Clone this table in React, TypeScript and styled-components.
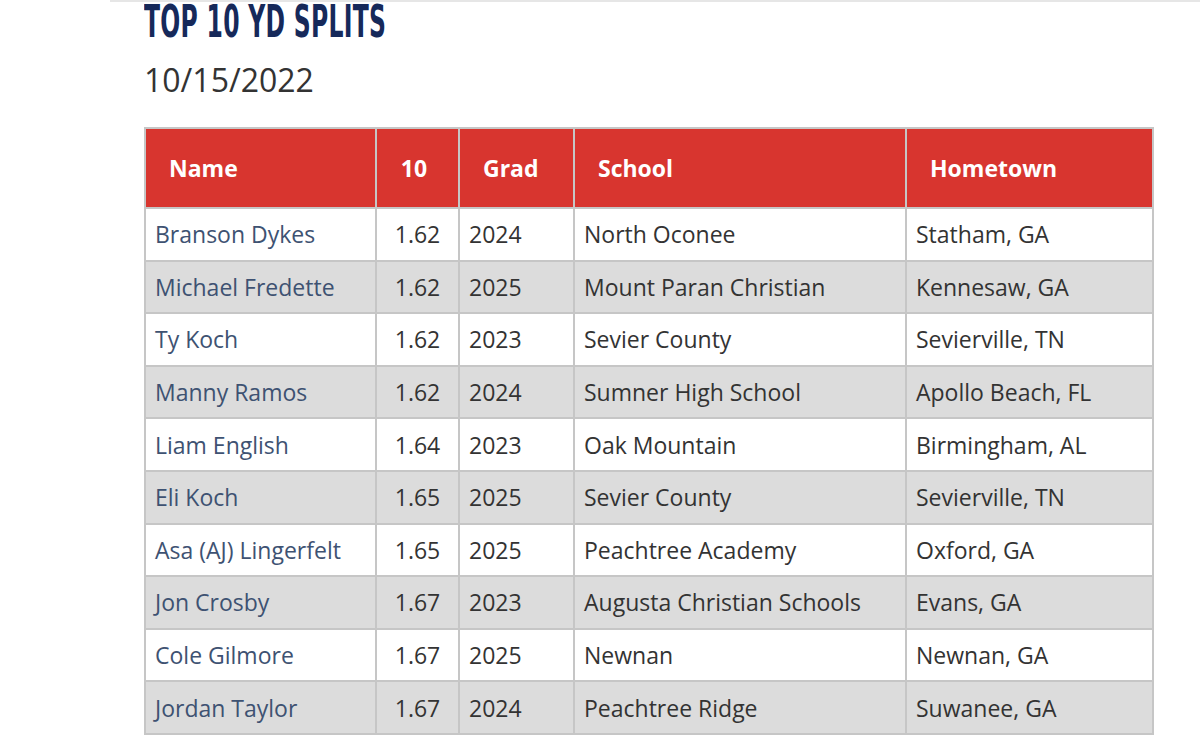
import styled, { createGlobalStyle } from "styled-components";

const GlobalStyle = createGlobalStyle`
  * { box-sizing: border-box; }
  body {
    margin: 0;
    background: #ffffff;
    font-family: "Open Sans", "Noto Sans", sans-serif;
    color: #333333;
    overflow: hidden;
  }
`;

const ROWS = [
  ["Branson Dykes", "1.62", "2024", "North Oconee", "Statham, GA"],
  ["Michael Fredette", "1.62", "2025", "Mount Paran Christian", "Kennesaw, GA"],
  ["Ty Koch", "1.62", "2023", "Sevier County", "Sevierville, TN"],
  ["Manny Ramos", "1.62", "2024", "Sumner High School", "Apollo Beach, FL"],
  ["Liam English", "1.64", "2023", "Oak Mountain", "Birmingham, AL"],
  ["Eli Koch", "1.65", "2025", "Sevier County", "Sevierville, TN"],
  ["Asa (AJ) Lingerfelt", "1.65", "2025", "Peachtree Academy", "Oxford, GA"],
  ["Jon Crosby", "1.67", "2023", "Augusta Christian Schools", "Evans, GA"],
  ["Cole Gilmore", "1.67", "2025", "Newnan", "Newnan, GA"],
  ["Jordan Taylor", "1.67", "2024", "Peachtree Ridge", "Suwanee, GA"],
];

const COLS = [231, 83, 115, 332, 247];

const Frame = styled.div`
  margin-left: 110px;
  border-top: 2px solid #e6e6e6;
  padding: 0 0 0 34px;
`;

const Title = styled.h1`
  margin: 0;
  height: 40px;
  font-family: "DejaVu Sans Condensed", "DejaVu Sans", sans-serif;
  font-weight: 700;
  font-size: 45px;
  line-height: 40px;
  color: #16295a;
  white-space: nowrap;
  display: block;
  transform: scaleX(0.58);
  transform-origin: left center;
  letter-spacing: 0.5px;
`;

const DateLine = styled.div`
  font-size: 32px;
  line-height: 44px;
  margin-top: 16px;
  color: #333333;
`;

const Table = styled.table`
  margin-top: 25px;
  border-collapse: collapse;
  table-layout: fixed;
  width: 1008px;
  border: 2px solid #c6c6c6;
`;

const HeadCell = styled.th<{ $center?: boolean }>`
  height: 80px;
  background: #d8352f;
  color: #ffffff;
  font-weight: 700;
  font-size: 23px;
  text-align: ${(p) => (p.$center ? "center" : "left")};
  padding: ${(p) => (p.$center ? "0 7px 0 0" : "0 0 0 23px")};
  border: 2px solid #c6c6c6;
`;

const Row = styled.tr<{ $alt: boolean }>`
  height: 52.6px;
  background: ${(p) => (p.$alt ? "#dcdcdc" : "#ffffff")};
`;

const Cell = styled.td<{ $center?: boolean; $link?: boolean }>`
  font-size: 23px;
  color: ${(p) => (p.$link ? "#3e5272" : "#333333")};
  text-align: ${(p) => (p.$center ? "center" : "left")};
  padding: 0 0 0 ${(p) => (p.$center ? "0" : "9px")};
  border: 2px solid #c6c6c6;
  white-space: nowrap;
`;

export default function App() {
  return (
    <>
      <GlobalStyle />
      <Frame>
        <Title>TOP 10 YD SPLITS</Title>
        <DateLine>10/15/2022</DateLine>
        <Table>
          <colgroup>
            {COLS.map((w, i) => (
              <col key={i} style={{ width: w }} />
            ))}
          </colgroup>
          <thead>
            <tr>
              <HeadCell>Name</HeadCell>
              <HeadCell $center>10</HeadCell>
              <HeadCell>Grad</HeadCell>
              <HeadCell>School</HeadCell>
              <HeadCell>Hometown</HeadCell>
            </tr>
          </thead>
          <tbody>
            {ROWS.map((r, i) => (
              <Row key={r[0]} $alt={i % 2 === 1}>
                <Cell $link>{r[0]}</Cell>
                <Cell $center>{r[1]}</Cell>
                <Cell>{r[2]}</Cell>
                <Cell>{r[3]}</Cell>
                <Cell>{r[4]}</Cell>
              </Row>
            ))}
          </tbody>
        </Table>
      </Frame>
    </>
  );
}
